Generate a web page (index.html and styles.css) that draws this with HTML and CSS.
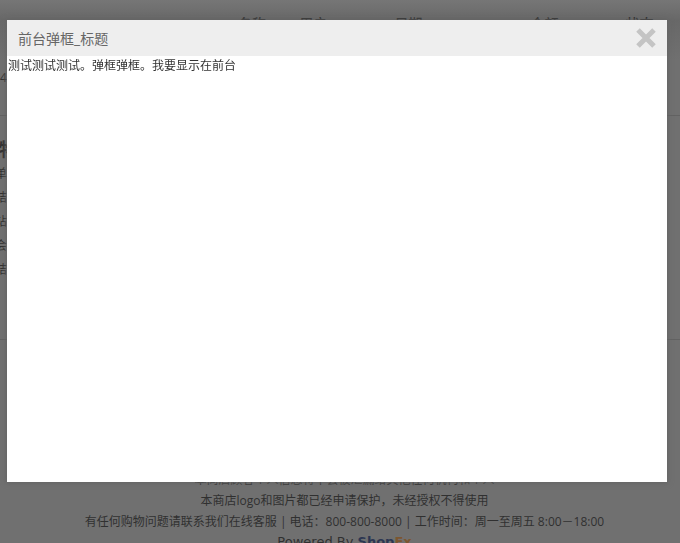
FILE: index.html
```html
<!DOCTYPE html>
<html lang="zh-CN">
<head>
<meta charset="utf-8">
<title>前台弹框_标题</title>
<meta name="viewport" content="width=device-width, initial-scale=1">
<link rel="stylesheet" href="styles.css">
</head>
<body>
<div class="page">
  <main>
    <section class="orders">
      <table class="orders-table">
        <colgroup><col class="c-id"><col class="c-name"><col class="c-user"><col class="c-date"><col class="c-sum"><col class="c-state"></colgroup>
        <thead><tr><th></th><th>名称</th><th>用户</th><th>日期</th><th>金额</th><th>状态</th></tr></thead>
        <tbody><tr><td>4</td><td></td><td></td><td></td><td></td><td></td></tr></tbody>
      </table>
    </section>
    <section class="help">
      <h2>物</h2>
      <ul>
        <li>单</li>
        <li>结</li>
        <li>站</li>
        <li>会</li>
        <li>结</li>
      </ul>
    </section>
  </main>
  <footer class="footer">
    <p>本商店顾客个人信息将不会被泄漏给其他任何机构和个人</p>
    <p>本商店logo和图片都已经申请保护，未经授权不得使用</p>
    <p>有任何购物问题请联系我们在线客服 | 电话：800-800-8000 | 工作时间：周一至周五 8:00－18:00</p>
    <p class="powered">Powered By <b class="shop">Shop</b><b class="ex">Ex</b></p>
  </footer>
</div>
<div class="dialog" role="dialog" aria-modal="true" aria-labelledby="dialog-title">
  <header class="dialog-head">
    <h1 id="dialog-title">前台弹框_标题</h1>
    <button class="close" type="button" aria-label="关闭">
      <svg viewBox="0 0 20 20" width="20" height="20" aria-hidden="true"><path d="M2 2L18 18M18 2L2 18" stroke="#c4c4c4" stroke-width="5" fill="none"/></svg>
    </button>
  </header>
  <div class="dialog-body">测试测试测试。弹框弹框。我要显示在前台</div>
</div>
</body>
</html>
```
FILE: styles.css
```css
* { box-sizing: border-box; }
body {
  margin: 0;
  background: #707070;
  color: #303030;
  font: 12px/21px "Open Sans", "Noto Sans CJK SC", sans-serif;
}
h1, h2, p, ul { margin: 0; padding: 0; }
.page {
  height: 100vh;
  overflow: hidden;
  background: linear-gradient(#767676, #686868 20px, #6c6c6c 40px, #707070 60px);
}
.orders {
  height: 116px;
  padding-top: 14px;
  border-bottom: 1px solid #626262;
}
.orders-table {
  width: 100%;
  table-layout: fixed;
  border-collapse: collapse;
}
.orders-table th, .orders-table td {
  padding: 0;
  text-align: left;
}
.orders-table th {
  height: 20px;
  font-size: 14px;
  font-weight: 500;
  line-height: 20px;
  color: #222;
}
.orders-table td {
  height: 86px;
}
.c-id { width: 35%; }
.c-name { width: 9%; }
.c-user { width: 14%; }
.c-date { width: 20%; }
.c-sum { width: 14%; }
.c-state { width: 8%; }
.help {
  height: 224px;
  padding-top: 20px;
  border-bottom: 1px solid #626262;
}
.help h2 {
  margin-left: -1px;
  font-size: 18px;
  line-height: 26px;
}
.help ul {
  margin-left: -5px;
  list-style: none;
}
.help li { line-height: 24px; }
.footer {
  padding-top: 129px;
  padding-left: 9px;
  text-align: center;
}
.powered {
  font-family: "DejaVu Sans", sans-serif;
  font-size: 13px;
  line-height: 20px;
}
.shop { color: #2c3652; }
.ex { color: #7c5630; }
.dialog {
  position: fixed;
  inset: 20px 13px 61px 7px;
  background: #fff;
  box-shadow: 0 0 5px 1px #646464;
}
.dialog-head {
  display: flex;
  align-items: center;
  justify-content: space-between;
  height: 36px;
  padding: 0 11px;
  background: #eee;
}
.dialog-head h1 {
  font-size: 14px;
  font-weight: normal;
  color: #666;
}
.close {
  display: flex;
  padding: 0;
  border: 0;
  background: none;
  cursor: pointer;
}
.dialog-body {
  padding: 0 1px;
  line-height: 20px;
  color: #333;
}
```
